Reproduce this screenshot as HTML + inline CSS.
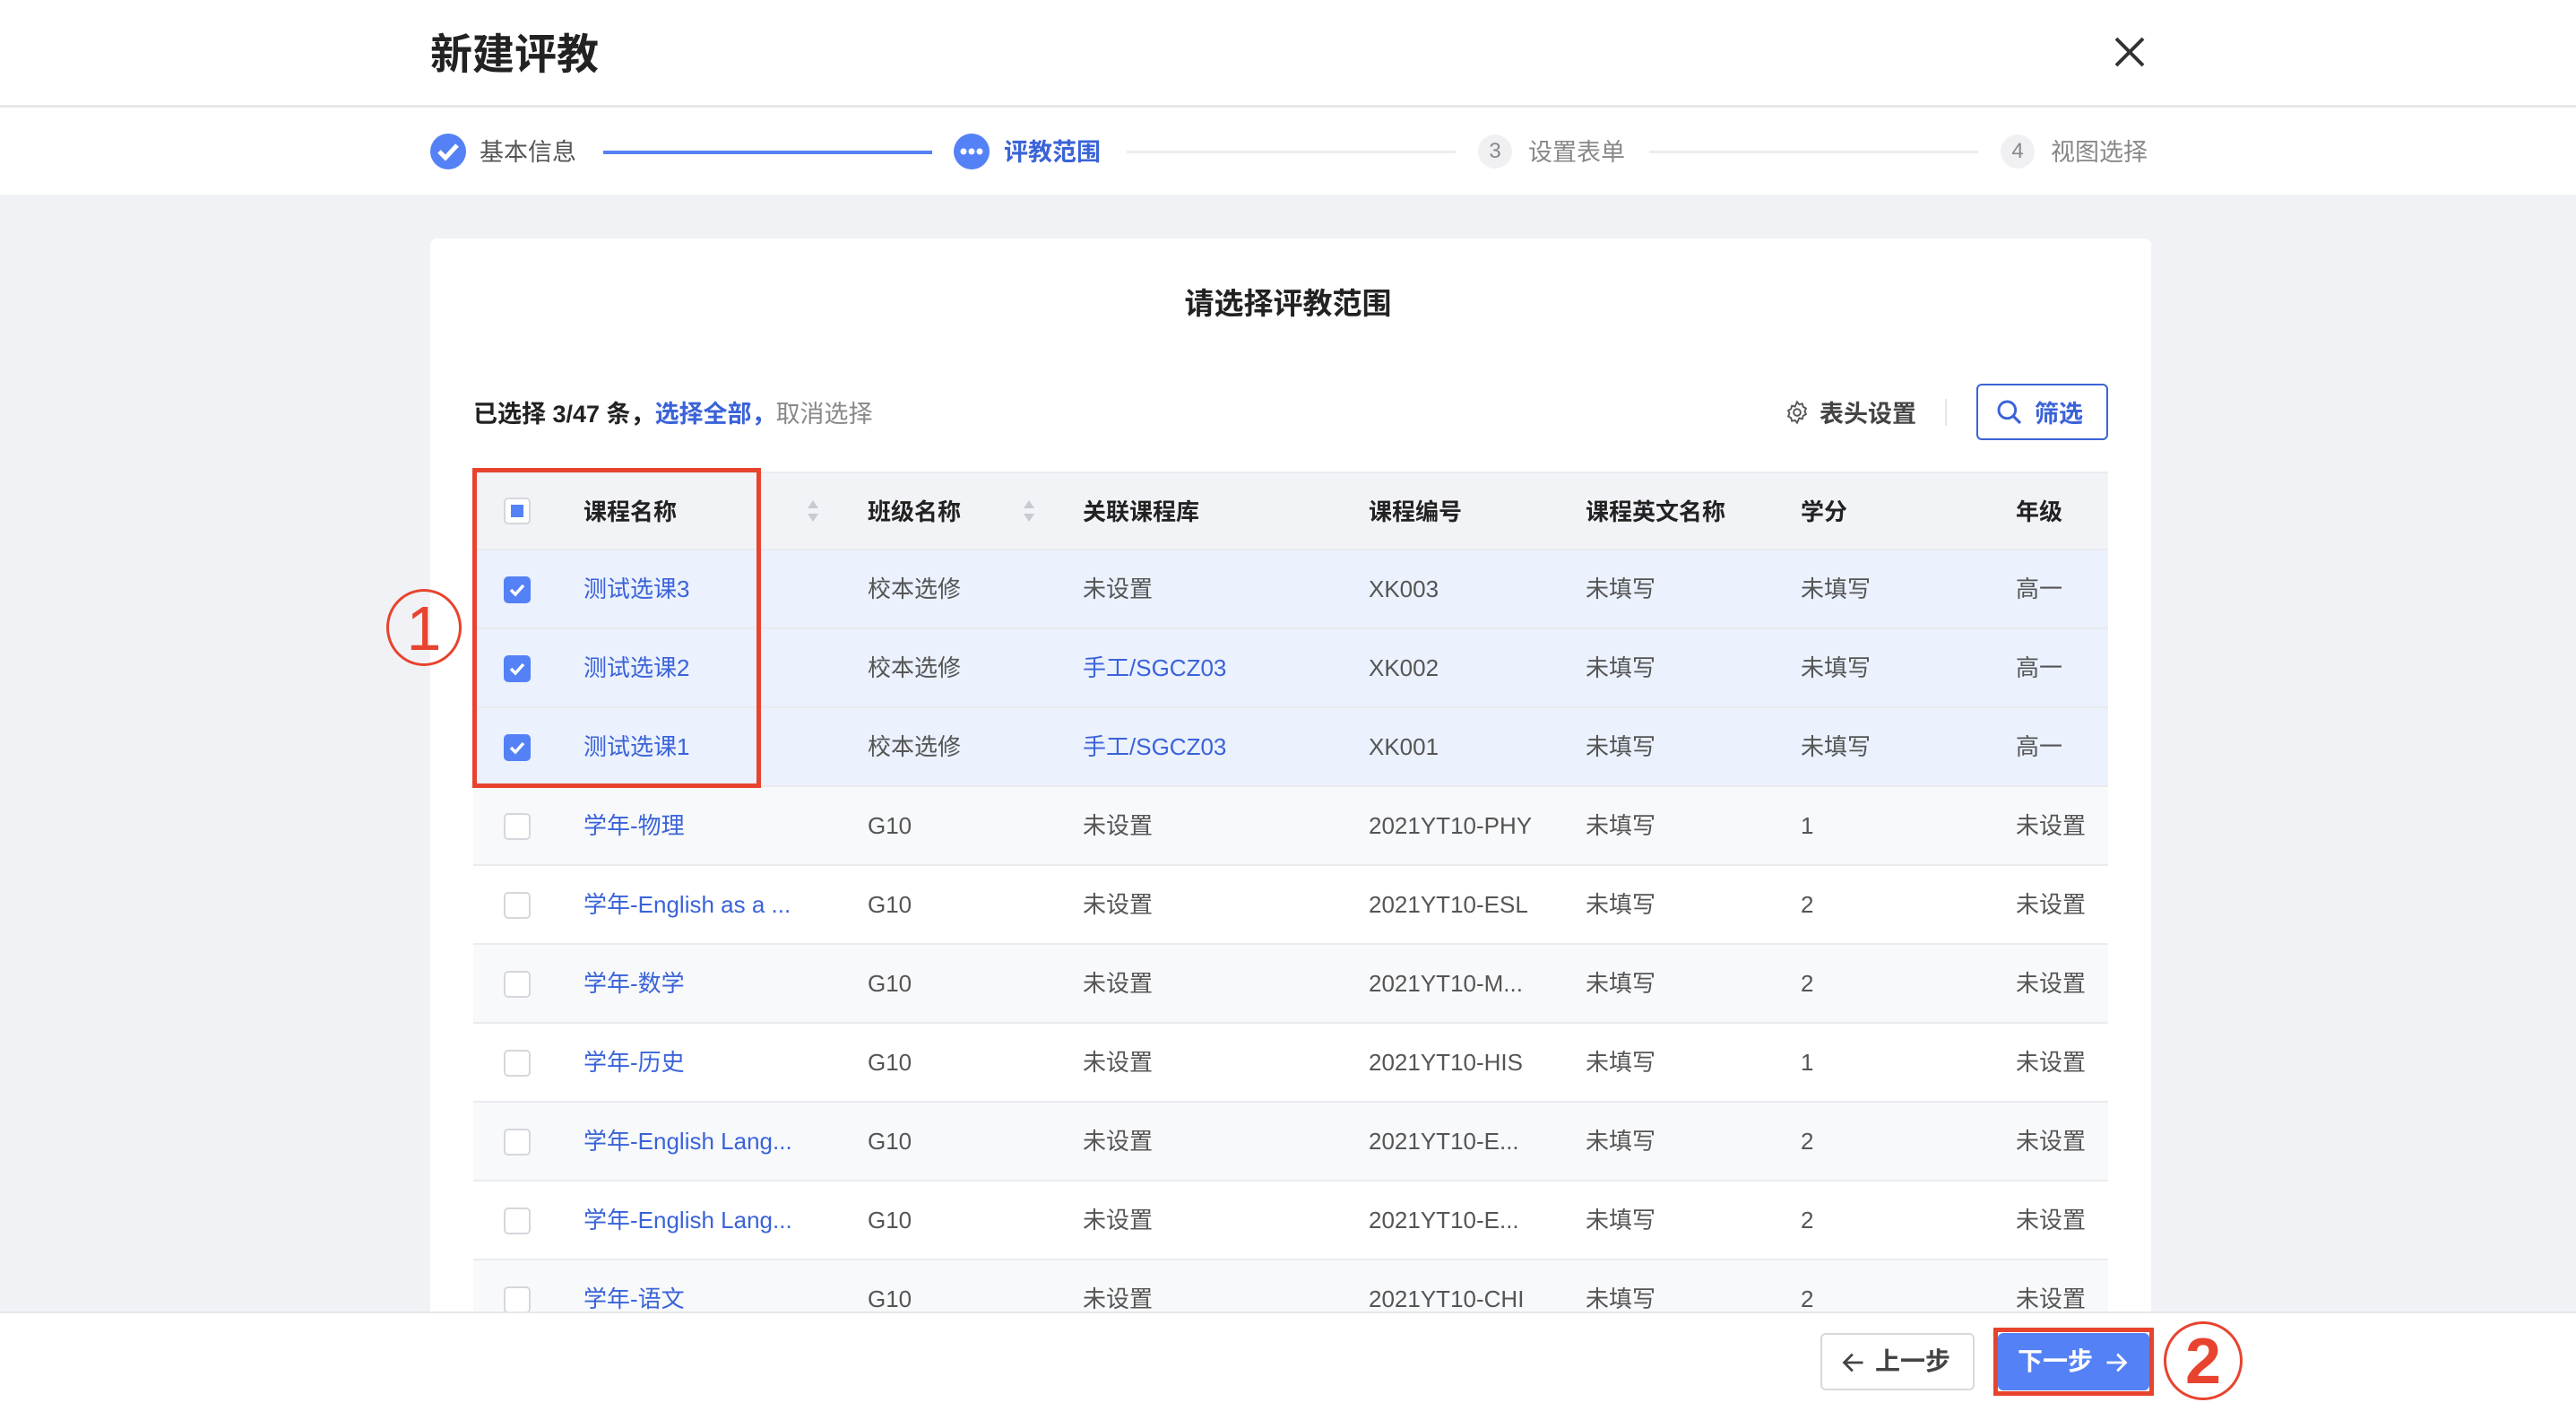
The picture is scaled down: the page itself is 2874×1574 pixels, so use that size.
<!DOCTYPE html>
<html><head><meta charset="utf-8"><style>
*{box-sizing:border-box;margin:0;padding:0}
body{width:2874px;height:1574px;overflow:hidden;background:#f0f2f6;font-family:"Liberation Sans","Noto Sans CJK SC",sans-serif;color:#333;position:relative}
.abs{position:absolute}
.hdr{left:0;top:0;width:2874px;height:217px;background:#fff}
.hline{left:0;top:117px;width:2874px;height:3px;background:#e8e8ea}
.title{left:480px;top:22px;font-size:47px;font-weight:bold;color:#222}
.step{font-size:27px;top:148px}
.card{left:480px;top:266px;width:1920px;height:1300px;background:#fff;border-radius:8px}
.ct{left:0;width:2874px;text-align:center;top:312px;font-size:33px;font-weight:bold;color:#222}
.tb{font-size:27px;top:440px}
.row{left:528px;width:1824px;height:88px;border-bottom:2px solid #e9ebef;font-size:26px;color:#555}
.row span{position:absolute;top:0;height:86px;line-height:86px;white-space:nowrap}
.cb{position:absolute;left:562px;width:30px;height:30px;border:2px solid #d5d7dc;border-radius:5px;background:#fff}
.cbc{background:#5481f5;border-color:#5481f5}
.lk{color:#3a63d8}
</style></head><body>
<div class="abs hdr"></div>
<div class="abs hline"></div>
<div class="abs title">新建评教</div>
<svg class="abs" style="left:2358px;top:40px" width="36" height="36"><path d="M3 3L33 33M33 3L3 33" stroke="#333" stroke-width="4"/></svg>
<svg class="abs" style="left:480px;top:149px" width="40" height="40"><circle cx="20" cy="20" r="20" fill="#5481f5"/><path d="M10 20l7 7 13-14" stroke="#fff" stroke-width="5" fill="none"/></svg>
<div class="abs step" style="left:535px;color:#555">基本信息</div>
<div class="abs" style="left:673px;top:168px;width:367px;height:4px;background:#5481f5"></div>
<svg class="abs" style="left:1064px;top:149px" width="40" height="40"><circle cx="20" cy="20" r="20" fill="#5481f5"/><circle cx="11" cy="20" r="3.5" fill="#fff"/><circle cx="20" cy="20" r="3.5" fill="#fff"/><circle cx="29" cy="20" r="3.5" fill="#fff"/></svg>
<div class="abs step" style="left:1120px;color:#3a63d8;font-weight:bold">评教范围</div>
<div class="abs" style="left:1257px;top:168px;width:367px;height:3px;background:#ececee"></div>
<div class="abs" style="left:1649px;top:150px;width:38px;height:38px;border-radius:50%;background:#f0f0f2;color:#888;font-size:24px;text-align:center;line-height:38px">3</div>
<div class="abs step" style="left:1705px;color:#888">设置表单</div>
<div class="abs" style="left:1840px;top:168px;width:367px;height:3px;background:#ececee"></div>
<div class="abs" style="left:2232px;top:150px;width:38px;height:38px;border-radius:50%;background:#f0f0f2;color:#888;font-size:24px;text-align:center;line-height:38px">4</div>
<div class="abs step" style="left:2288px;color:#888">视图选择</div>
<div class="abs card"></div>
<div class="abs ct">请选择评教范围</div>
<div class="abs tb" style="left:528px;color:#222;font-weight:bold">已选择 3/47 条，<span style="color:#3a63d8">选择全部，</span><span style="color:#888;font-weight:normal">取消选择</span></div>
<svg class="abs" style="left:1991px;top:446px" width="28" height="28" viewBox="0 0 24 24"><path d="M12 2l2 2.5 3-.8.8 3 2.7 1.5-1.2 2.8 1.2 2.8-2.7 1.5-.8 3-3-.8L12 22l-2-2.5-3 .8-.8-3-2.7-1.5L4.700 13 3.500 10.200 6.200 8.700l.8-3 3 .8z" fill="none" stroke="#555" stroke-width="1.6"/><circle cx="12" cy="12" r="3.3" fill="none" stroke="#555" stroke-width="1.6"/></svg>
<div class="abs tb" style="left:2030px;color:#444;font-weight:bold">表头设置</div>
<div class="abs" style="left:2170px;top:445px;width:2px;height:30px;background:#e5e5e5"></div>
<div class="abs" style="left:2205px;top:428px;width:147px;height:63px;border:2px solid #3a63d8;border-radius:6px"></div>
<svg class="abs" style="left:2226px;top:444px" width="32" height="32" viewBox="0 0 24 24"><circle cx="10" cy="10" r="7" fill="none" stroke="#3a63d8" stroke-width="2.2"/><path d="M15 15l6 6" stroke="#3a63d8" stroke-width="2.4"/></svg>
<div class="abs tb" style="left:2270px;color:#3a63d8;font-weight:bold">筛选</div>
<div class="abs row" style="top:526px;background:#f2f3f7;font-weight:bold;color:#222;border-top:2px solid #e9ebef;height:88px">
<span style="left:123px">课程名称</span><span style="left:440px">班级名称</span><span style="left:680px">关联课程库</span><span style="left:999px">课程编号</span><span style="left:1241px">课程英文名称</span><span style="left:1481px">学分</span><span style="left:1721px">年级</span>
</div>
<div class="cb" style="top:555px"></div><div class="abs" style="left:570px;top:563px;width:14px;height:14px;background:#5481f5"></div>
<svg class="abs" style="left:899px;top:556px" width="16" height="28"><path d="M8 2l6 9H2zM8 26l6-9H2z" fill="#c8cad0"/></svg>
<svg class="abs" style="left:1140px;top:556px" width="16" height="28"><path d="M8 2l6 9H2zM8 26l6-9H2z" fill="#c8cad0"/></svg>
<div class="abs row" style="top:614px;background:#ebf1fd"><span class="lk" style="left:123px">测试选课3</span><span style="left:440px">校本选修</span><span style="left:680px">未设置</span><span style="left:999px">XK003</span><span style="left:1241px">未填写</span><span style="left:1481px">未填写</span><span style="left:1721px">高一</span></div>
<div class="abs row" style="top:702px;background:#ebf1fd"><span class="lk" style="left:123px">测试选课2</span><span style="left:440px">校本选修</span><span class="lk" style="left:680px">手工/SGCZ03</span><span style="left:999px">XK002</span><span style="left:1241px">未填写</span><span style="left:1481px">未填写</span><span style="left:1721px">高一</span></div>
<div class="abs row" style="top:790px;background:#ebf1fd"><span class="lk" style="left:123px">测试选课1</span><span style="left:440px">校本选修</span><span class="lk" style="left:680px">手工/SGCZ03</span><span style="left:999px">XK001</span><span style="left:1241px">未填写</span><span style="left:1481px">未填写</span><span style="left:1721px">高一</span></div>
<div class="abs row" style="top:878px;background:#f8f9fb"><span class="lk" style="left:123px">学年-物理</span><span style="left:440px">G10</span><span style="left:680px">未设置</span><span style="left:999px">2021YT10-PHY</span><span style="left:1241px">未填写</span><span style="left:1481px">1</span><span style="left:1721px">未设置</span></div>
<div class="abs row" style="top:966px;background:#fff"><span class="lk" style="left:123px">学年-English as a ...</span><span style="left:440px">G10</span><span style="left:680px">未设置</span><span style="left:999px">2021YT10-ESL</span><span style="left:1241px">未填写</span><span style="left:1481px">2</span><span style="left:1721px">未设置</span></div>
<div class="abs row" style="top:1054px;background:#f8f9fb"><span class="lk" style="left:123px">学年-数学</span><span style="left:440px">G10</span><span style="left:680px">未设置</span><span style="left:999px">2021YT10-M...</span><span style="left:1241px">未填写</span><span style="left:1481px">2</span><span style="left:1721px">未设置</span></div>
<div class="abs row" style="top:1142px;background:#fff"><span class="lk" style="left:123px">学年-历史</span><span style="left:440px">G10</span><span style="left:680px">未设置</span><span style="left:999px">2021YT10-HIS</span><span style="left:1241px">未填写</span><span style="left:1481px">1</span><span style="left:1721px">未设置</span></div>
<div class="abs row" style="top:1230px;background:#f8f9fb"><span class="lk" style="left:123px">学年-English Lang...</span><span style="left:440px">G10</span><span style="left:680px">未设置</span><span style="left:999px">2021YT10-E...</span><span style="left:1241px">未填写</span><span style="left:1481px">2</span><span style="left:1721px">未设置</span></div>
<div class="abs row" style="top:1318px;background:#fff"><span class="lk" style="left:123px">学年-English Lang...</span><span style="left:440px">G10</span><span style="left:680px">未设置</span><span style="left:999px">2021YT10-E...</span><span style="left:1241px">未填写</span><span style="left:1481px">2</span><span style="left:1721px">未设置</span></div>
<div class="abs row" style="top:1406px;background:#f8f9fb"><span class="lk" style="left:123px">学年-语文</span><span style="left:440px">G10</span><span style="left:680px">未设置</span><span style="left:999px">2021YT10-CHI</span><span style="left:1241px">未填写</span><span style="left:1481px">2</span><span style="left:1721px">未设置</span></div>
<div class="cb cbc" style="top:643px"></div><div class="cb cbc" style="top:731px"></div><div class="cb cbc" style="top:819px"></div>
<svg class="abs" style="left:562px;top:643px" width="30" height="206"><path d="M8 15l5 5 9-10M8 103l5 5 9-10M8 191l5 5 9-10" stroke="#fff" stroke-width="3.5" fill="none"/></svg>
<div class="cb" style="top:907px"></div><div class="cb" style="top:995px"></div><div class="cb" style="top:1083px"></div><div class="cb" style="top:1171px"></div><div class="cb" style="top:1259px"></div><div class="cb" style="top:1347px"></div><div class="cb" style="top:1435px"></div>
<div class="abs" style="left:527px;top:522px;width:322px;height:357px;border:5px solid #e8432e"></div>
<div class="abs" style="left:431px;top:657px;width:84px;height:86px;border:3px solid #e8432e;border-radius:50%;color:#e8432e;font-size:70px;text-align:center;line-height:82px">1</div>
<div class="abs" style="left:0;top:1463px;width:2874px;height:111px;background:#fff;border-top:2px solid #e6e7ea"></div>
<div class="abs" style="left:2031px;top:1487px;width:172px;height:64px;border:2px solid #d9d9d9;border-radius:6px"></div>
<svg class="abs" style="left:2054px;top:1506px" width="28" height="28" viewBox="0 0 24 24"><path d="M21 12H4M11 4l-8 8 8 8" fill="none" stroke="#444" stroke-width="2.4"/></svg>
<div class="abs" style="left:2092px;top:1487px;font-size:28px;color:#444;line-height:64px;font-weight:bold">上一步</div>
<div class="abs" style="left:2224px;top:1481px;width:179px;height:76px;border:5px solid #e8432e"></div>
<div class="abs" style="left:2229px;top:1487px;width:169px;height:64px;background:#5481f5;border-radius:6px"></div>
<div class="abs" style="left:2251px;top:1487px;font-size:28px;color:#fff;line-height:64px;font-weight:bold">下一步</div>
<svg class="abs" style="left:2347px;top:1506px" width="28" height="28" viewBox="0 0 24 24"><path d="M3 12h17M13 4l8 8-8 8" fill="none" stroke="#fff" stroke-width="2.4"/></svg>
<div class="abs" style="left:2414px;top:1474px;width:88px;height:88px;border:3px solid #e8432e;border-radius:50%;color:#e8432e;font-size:72px;font-weight:bold;text-align:center;line-height:84px">2</div>
</body></html>
